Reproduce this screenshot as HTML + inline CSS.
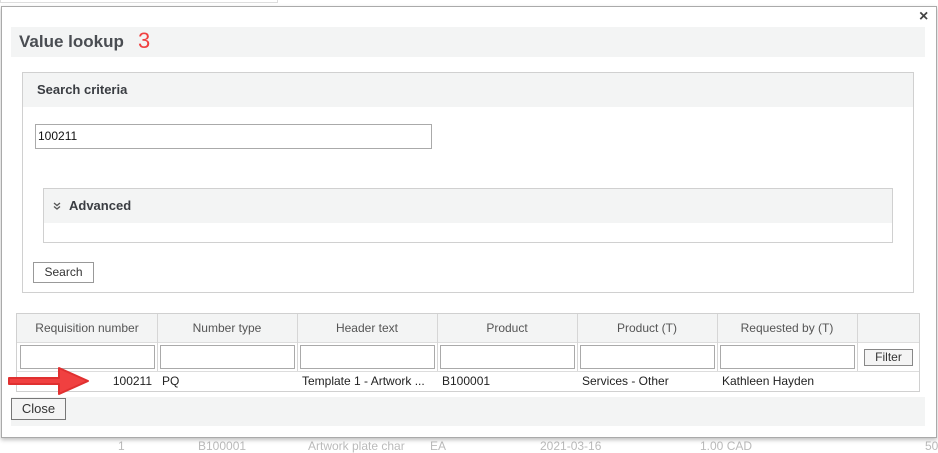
<!DOCTYPE html>
<html><head><style>
body{margin:0;width:938px;height:445px;background:#fff;position:relative;overflow:hidden;font-family:"Liberation Sans",sans-serif;font-size:12px;color:#333}
div{box-sizing:border-box;position:absolute}
.g{background:#f3f4f4}
.b{border:1px solid #ccc}
.col{position:absolute;top:0;height:57px;border-left:1px solid #d6d6d6}
.inp{border:1px solid #aaa;background:#fff;height:24px}
.th{top:0;height:29px;line-height:29px;text-align:center;color:#555;font-size:12px}
</style></head><body>
<div style="left:0;top:0;width:278px;height:3px;border:1px solid #ddd;border-top:none"></div>
<div style="left:0;top:437px;width:938px;height:8px;color:#bbb;font-size:12px;line-height:14px;white-space:nowrap">
<span style="position:absolute;left:118px;top:2px">1</span><span style="position:absolute;left:198px;top:2px">B100001</span><span style="position:absolute;left:308px;top:2px">Artwork plate char</span><span style="position:absolute;left:430px;top:2px">EA</span><span style="position:absolute;left:540px;top:2px">2021-03-16</span><span style="position:absolute;left:700px;top:2px">1.00 CAD</span><span style="position:absolute;left:925px;top:2px">50</span></div>
<div style="left:1px;top:6px;width:936px;height:432px;border:1px solid #aaa;background:#fff;box-shadow:0 2px 4px rgba(0,0,0,.25)">
</div>
<div style="left:919px;top:8px;font-size:16px;font-weight:bold;color:#444">×</div>
<div class="g" style="left:11px;top:27px;width:914px;height:30px"><span style="position:absolute;left:8px;top:5px;font-size:17px;font-weight:bold;color:#4a4d52">Value lookup</span><span style="position:absolute;left:127px;top:1px;font-size:22px;color:#f04040">3</span></div>
<div class="b" style="left:22px;top:72px;width:892px;height:221px;border-color:#d0d0d0">
<div class="g" style="left:0;top:0;width:890px;height:34px;line-height:34px;padding-left:14px;font-weight:bold;font-size:13px;color:#3a3d42">Search criteria</div>
</div>
<div class="inp" style="left:35px;top:124px;width:397px;height:25px;line-height:23px;padding-left:2px;font-size:12px;color:#111">100211</div>
<div class="b" style="left:43px;top:188px;width:850px;height:55px;border-color:#d0d0d0">
<div class="g" style="left:0;top:0;width:848px;height:34px;line-height:34px;padding-left:25px;font-weight:bold;font-size:13px;color:#3a3d42">Advanced<svg style="position:absolute;left:9px;top:13px" width="8" height="8"><path d="M1 1 L4 3.5 L7 1 M1 4.5 L4 7 L7 4.5" fill="none" stroke="#555" stroke-width="1.3"/></svg></div>
</div>
<div style="left:33px;top:262px;width:61px;height:21px;border:1px solid #999;background:#fff;text-align:center;line-height:19px">Search</div>
<div style="left:16px;top:313px;width:904px;height:79px;border:1px solid #d0d0d0;background:#fff">
<div class="g" style="left:0;top:0;width:902px;height:28px"></div>
<div class="th" style="left:0;width:140px">Requisition number</div>
<div class="th" style="left:140px;width:140px">Number type</div>
<div class="th" style="left:280px;width:140px">Header text</div>
<div class="th" style="left:420px;width:140px">Product</div>
<div class="th" style="left:560px;width:140px">Product (T)</div>
<div class="th" style="left:700px;width:140px">Requested by (T)</div>
<div style="left:0;top:28px;width:902px;border-top:1px solid #ddd"></div>
<div style="left:0;top:57px;width:902px;border-top:1px solid #ddd"></div>
<div class="col" style="left:140px"></div><div class="col" style="left:280px"></div><div class="col" style="left:420px"></div><div class="col" style="left:560px"></div><div class="col" style="left:700px"></div><div class="col" style="left:840px"></div>
<div class="inp" style="left:3px;top:31px;width:135px"></div>
<div class="inp" style="left:143px;top:31px;width:135px"></div>
<div class="inp" style="left:283px;top:31px;width:135px"></div>
<div class="inp" style="left:423px;top:31px;width:135px"></div>
<div class="inp" style="left:563px;top:31px;width:135px"></div>
<div class="inp" style="left:703px;top:31px;width:135px"></div>
<div style="left:847px;top:35px;width:49px;height:17px;border:1px solid #888;background:#f4f4f4;text-align:center;line-height:15px">Filter</div>
<div style="left:0;top:58px;width:140px;height:19px;line-height:19px;text-align:right;padding-right:5px;color:#222">100211</div>
<div style="left:145px;top:58px;line-height:19px;color:#222">PQ</div>
<div style="left:285px;top:58px;line-height:19px;color:#222">Template 1 - Artwork ...</div>
<div style="left:425px;top:58px;line-height:19px;color:#222">B100001</div>
<div style="left:565px;top:58px;line-height:19px;color:#222">Services - Other</div>
<div style="left:705px;top:58px;line-height:19px;color:#222">Kathleen Hayden</div>
</div>
<svg style="position:absolute;left:4px;top:364px" width="86" height="34"><path d="M5 14 L55 14 L55 4 L84 17 L55 30 L55 20 L5 20 Z" fill="#f04040" stroke="#e03030" stroke-width="2" stroke-linejoin="round"/></svg>
<div class="g" style="left:11px;top:397px;width:914px;height:29px"></div>
<div style="left:11px;top:398px;width:55px;height:22px;border:1px solid #777;background:#f4f4f4;text-align:center;line-height:20px;font-size:13px">Close</div>
</body></html>
